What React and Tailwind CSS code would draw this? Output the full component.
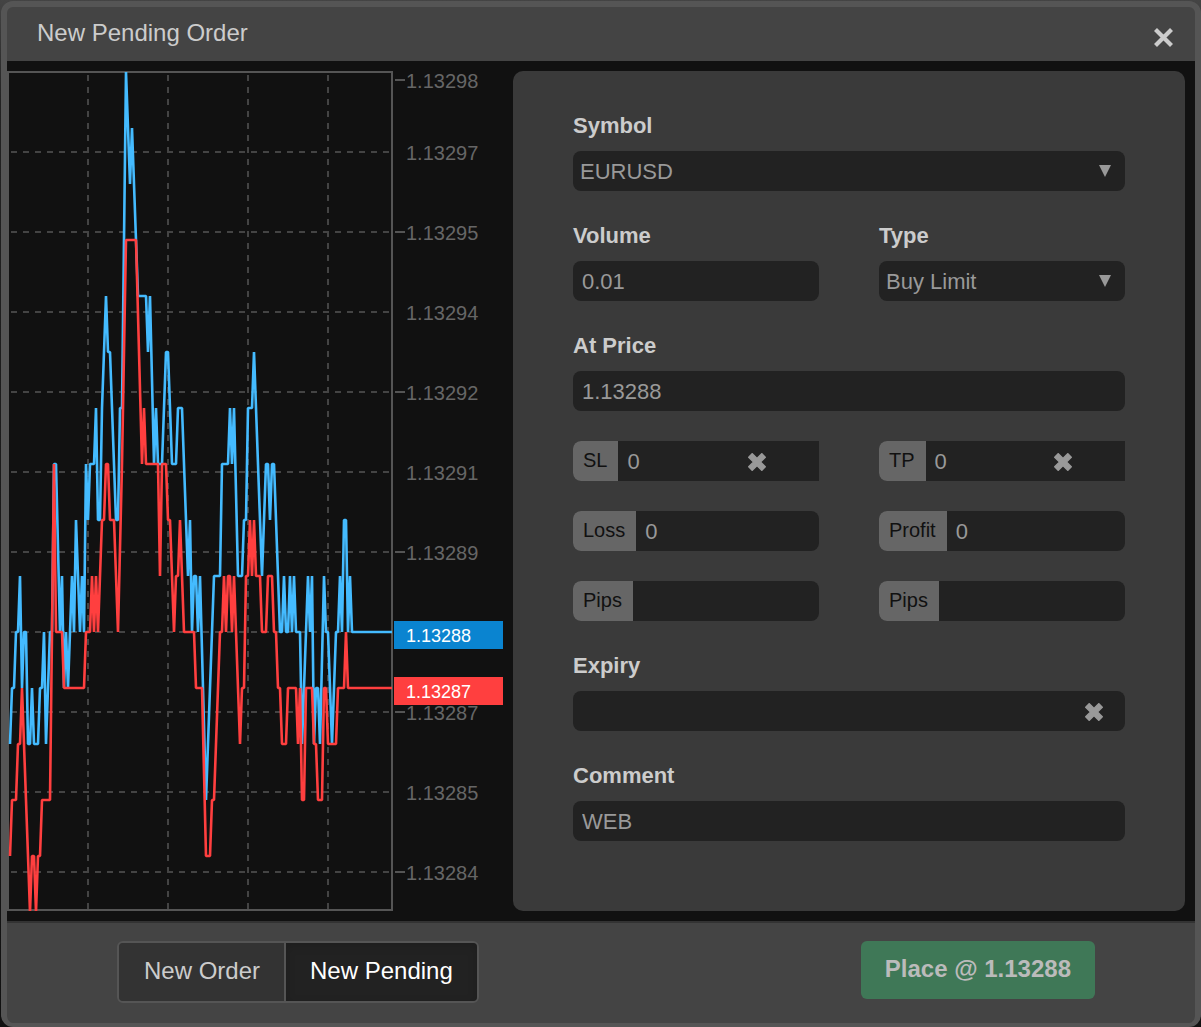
import React from "react";

const LEVEL_TOP = 72;
const LEVEL_STEP = 56;

// Each entry is [x, price level], level 0 being the top of the plot.
const ASK = [
  [10, 12], [12, 11], [14, 11], [16, 10], [18, 10], [20, 9], [22, 11], [24, 10], [26, 10], [28, 12],
  [30, 12], [32, 11], [34, 12], [38, 12], [40, 11], [42, 11], [44, 10], [46, 12], [50, 10], [52, 10],
  [54, 7], [56, 7], [60, 10], [62, 9], [64, 11], [66, 10], [68, 11], [72, 9], [74, 10], [76, 8],
  [80, 10], [82, 9], [84, 10], [86, 7], [88, 8], [90, 7], [94, 7], [96, 6], [98, 8], [100, 8],
  [102, 6], [106, 4], [108, 5], [110, 5], [116, 8], [118, 8], [120, 6], [122, 6], [126, 0], [130, 2],
  [132, 1], [138, 4], [146, 4], [148, 5], [150, 4], [154, 7], [156, 6], [158, 7], [162, 7], [166, 5],
  [168, 5], [172, 7], [176, 7], [178, 6], [182, 6], [188, 9], [190, 8], [192, 10], [194, 9], [196, 9],
  [198, 10], [200, 9], [206, 13], [214, 9], [220, 9], [222, 7], [228, 7], [230, 6], [232, 7], [234, 6],
  [238, 9], [242, 9], [244, 8], [246, 8], [248, 6], [252, 6], [254, 5], [262, 9], [266, 7], [268, 7],
  [270, 8], [272, 7], [274, 7], [280, 10], [282, 10], [284, 9], [286, 10], [288, 10], [290, 9], [292, 10],
  [294, 9], [296, 10], [300, 10], [302, 12], [308, 9], [310, 10], [312, 9], [314, 12], [316, 11], [318, 11],
  [320, 12], [324, 9], [326, 10], [328, 10], [332, 12], [336, 10], [338, 10], [340, 9], [342, 10], [344, 8],
  [346, 8], [348, 10], [350, 9], [352, 10], [392, 10],
];

const BID = [
  [10, 14], [12, 13], [16, 13], [18, 12], [20, 12], [22, 11], [30, 15], [32, 14], [34, 14], [36, 15],
  [38, 14], [40, 14], [42, 13], [50, 13], [54, 7], [56, 10], [62, 10], [64, 11], [84, 11], [86, 10],
  [90, 10], [92, 9], [94, 10], [96, 9], [98, 10], [102, 8], [104, 8], [106, 7], [108, 7], [110, 8],
  [114, 8], [118, 10], [122, 7], [126, 3], [136, 3], [142, 7], [144, 6], [146, 7], [158, 7], [160, 9],
  [162, 7], [166, 7], [168, 8], [170, 8], [174, 10], [176, 9], [178, 9], [180, 8], [184, 10], [194, 10],
  [196, 11], [202, 11], [206, 14], [210, 14], [212, 13], [214, 13], [220, 10], [222, 10], [224, 9], [226, 10],
  [228, 9], [230, 9], [232, 10], [234, 9], [240, 12], [242, 11], [244, 11], [246, 9], [248, 9], [250, 8],
  [252, 9], [254, 8], [256, 9], [260, 9], [262, 10], [266, 10], [268, 9], [272, 9], [274, 10], [276, 10],
  [278, 11], [280, 11], [282, 12], [286, 12], [288, 11], [296, 11], [298, 12], [300, 11], [302, 13], [304, 13],
  [306, 11], [312, 11], [314, 12], [316, 12], [318, 13], [322, 13], [324, 11], [326, 11], [328, 12], [336, 12],
  [338, 11], [344, 11], [346, 10], [348, 11], [392, 11],
];

const PRICES = [
  [80, "1.13298"], [152, "1.13297"], [232, "1.13295"], [312, "1.13294"], [392, "1.13292"], [472, "1.13291"],
  [552, "1.13289"], [712, "1.13287"], [792, "1.13285"], [872, "1.13284"],
];
const TICKS = [80, 232, 392, 552, 712, 872];
const ROWS = [152, 232, 312, 392, 472, 552, 632, 712, 792, 872];
const COLUMNS = [88, 168, 248, 328];

const toPoints = (series) => series.map(([x, level]) => `${x},${LEVEL_TOP + level * LEVEL_STEP}`).join(" ");

function TickChart() {
  return (
    <svg className="h-[840px] w-[496px] shrink-0" viewBox="7 71 496 840" role="img" aria-label="EURUSD tick chart">
      <g stroke="#444" strokeWidth="2" strokeDasharray="6 6">
        {ROWS.map((y) => <line key={y} x1="11" x2="391" y1={y} y2={y} />)}
        {COLUMNS.map((x) => <line key={x} x1={x} x2={x} y1="75" y2="909" />)}
      </g>
      <rect x="8" y="72" width="384" height="838" fill="none" stroke="#555" strokeWidth="2" />
      <g fill="none" strokeWidth="2.6" strokeLinejoin="bevel">
        <polyline points={toPoints(ASK)} stroke="#44bbff" />
        <polyline points={toPoints(BID)} stroke="#ff3f3f" />
      </g>
      <g stroke="#555" strokeWidth="2">
        {TICKS.map((y) => <line key={y} x1="395" x2="405" y1={y} y2={y} />)}
      </g>
      <g fill="#666" fontSize="20">
        {PRICES.map(([y, price]) => <text key={price + y} x="406" y={y + 8}>{price}</text>)}
      </g>
      <rect x="394" y="621" width="109" height="28" fill="#0a84d0" />
      <rect x="394" y="677" width="109" height="28" fill="#ff3f3f" />
      <g fill="#fff" fontSize="18">
        <text x="406" y="642">1.13288</text>
        <text x="406" y="698">1.13287</text>
      </g>
    </svg>
  );
}

function Cross({ className }) {
  return (
    <svg className={className} viewBox="0 0 18 18" fill="currentColor" stroke="currentColor" strokeWidth="1.6" strokeLinejoin="round" aria-hidden="true">
      <path d="M4.2 .8 9 5.6 13.8 .8 17.2 4.2 12.4 9 17.2 13.8 13.8 17.2 9 12.4 4.2 17.2 .8 13.8 5.6 9 .8 4.2Z" />
    </svg>
  );
}

const labelClass = "block h-10 pt-px text-[22px] leading-7 font-bold text-[#ccc]";
const inputClass = "block h-10 w-full min-w-0 rounded-lg bg-[#222] px-[9px] pt-0.5 text-[22px] text-[#999] outline-none";

function TextField({ id, label, value }) {
  return (
    <div>
      <label htmlFor={id} className={labelClass}>{label}</label>
      <input id={id} type="text" defaultValue={value} className={inputClass} />
    </div>
  );
}

function SelectField({ id, label, value }) {
  return (
    <div>
      <label htmlFor={id} className={labelClass}>{label}</label>
      <div className="grid items-center">
        <select id={id} className="col-start-1 row-start-1 h-10 w-full appearance-none rounded-lg bg-[#222] px-[7px] text-[22px] text-[#999] outline-none">
          <option>{value}</option>
        </select>
        <svg className="pointer-events-none col-start-1 row-start-1 mr-3.5 h-3 w-3 justify-self-end" viewBox="0 0 12 12" fill="#999" aria-hidden="true">
          <path d="M0 0H12L6 12Z" />
        </svg>
      </div>
    </div>
  );
}

function AddonField({ id, label, value = "", clearable = false }) {
  return (
    <div className={clearable ? "flex h-10 overflow-hidden rounded-l-lg bg-[#222]" : "flex h-10 overflow-hidden rounded-lg bg-[#222]"}>
      <label htmlFor={id} className="shrink-0 bg-[#666] pr-[11px] pl-2.5 text-xl leading-[38px] text-[#111]">{label}</label>
      <input id={id} type="text" defaultValue={value} className="w-0 min-w-0 flex-1 bg-transparent px-[9px] text-[22px] text-[#999] outline-none" />
      {clearable && (
        <button type="button" aria-label={`Clear ${label}`} className="mr-[53px] shrink-0 text-[#999]">
          <Cross className="mt-0.5 h-[18px] w-[18px]" />
        </button>
      )}
    </div>
  );
}

export default function App() {
  return (
    <div className="flex min-h-screen flex-col bg-linear-to-b from-[#444] via-[#222] via-10% to-[#111] pt-px pl-px font-['Liberation_Sans',Arial,sans-serif]">
      <main className="flex flex-1 flex-col rounded-xl border-6 border-b-4 border-[#555] bg-[#444]">
        <header className="flex h-[54px] items-start justify-between pr-[22px] pl-[30px]">
          <h1 className="pt-2.5 text-2xl leading-8 text-[#ccc]">New Pending Order</h1>
          <button type="button" aria-label="Close" className="pt-[21px] text-[#ccc]">
            <svg className="h-[19px] w-[19px]" viewBox="0 0 19 19" stroke="currentColor" strokeWidth="4.2" aria-hidden="true">
              <path d="M1.5 1.5 17.5 17.5M17.5 1.5 1.5 17.5" />
            </svg>
          </button>
        </header>

        <div className="flex gap-2.5 bg-[#111] py-2.5 pr-2.5">
          <TickChart />
          <form className="flex min-w-0 flex-1 flex-col gap-[30px] rounded-[10px] bg-[#3a3a3a] px-15 pt-10">
            <SelectField id="symbol" label="Symbol" value="EURUSD" />
            <div className="grid grid-cols-2 gap-15">
              <TextField id="volume" label="Volume" value="0.01" />
              <SelectField id="type" label="Type" value="Buy Limit" />
            </div>
            <TextField id="price" label="At Price" value="1.13288" />
            <div className="grid grid-cols-2 gap-x-15 gap-y-[30px]">
              <AddonField id="sl" label="SL" value="0" clearable />
              <AddonField id="tp" label="TP" value="0" clearable />
              <AddonField id="loss" label="Loss" value="0" />
              <AddonField id="profit" label="Profit" value="0" />
              <AddonField id="loss-pips" label="Pips" />
              <AddonField id="profit-pips" label="Pips" />
            </div>
            <div>
              <label htmlFor="expiry" className={labelClass}>Expiry</label>
              <div className="flex h-10 rounded-lg bg-[#222]">
                <input id="expiry" type="text" className="min-w-0 flex-1 bg-transparent px-[9px] text-[22px] text-[#999] outline-none" />
                <button type="button" aria-label="Clear expiry" className="mr-[22px] text-[#999]">
                  <Cross className="mt-0.5 h-[18px] w-[18px]" />
                </button>
              </div>
            </div>
            <TextField id="comment" label="Comment" value="WEB" />
          </form>
        </div>

        <footer className="flex flex-1 items-start justify-between border-t-2 border-[#333] pt-[18px] pr-[100px] pl-[110px] text-2xl">
          <div className="flex h-[62px] overflow-hidden rounded-md border-2 border-[#555]">
            <button type="button" className="border-r-2 border-[#555] bg-[#333] pr-6 pb-0.5 pl-[25px] text-[#ccc]">New Order</button>
            <button type="button" aria-pressed="true" className="bg-[#222] px-6 pb-0.5 text-white shadow-[inset_0_3px_10px_rgba(0,0,0,0.15)]">New Pending</button>
          </div>
          <button type="button" className="h-[58px] rounded-md bg-[#3f7857] px-6 pb-0.5 font-bold text-[#bbb]">Place @ 1.13288</button>
        </footer>
      </main>
    </div>
  );
}
